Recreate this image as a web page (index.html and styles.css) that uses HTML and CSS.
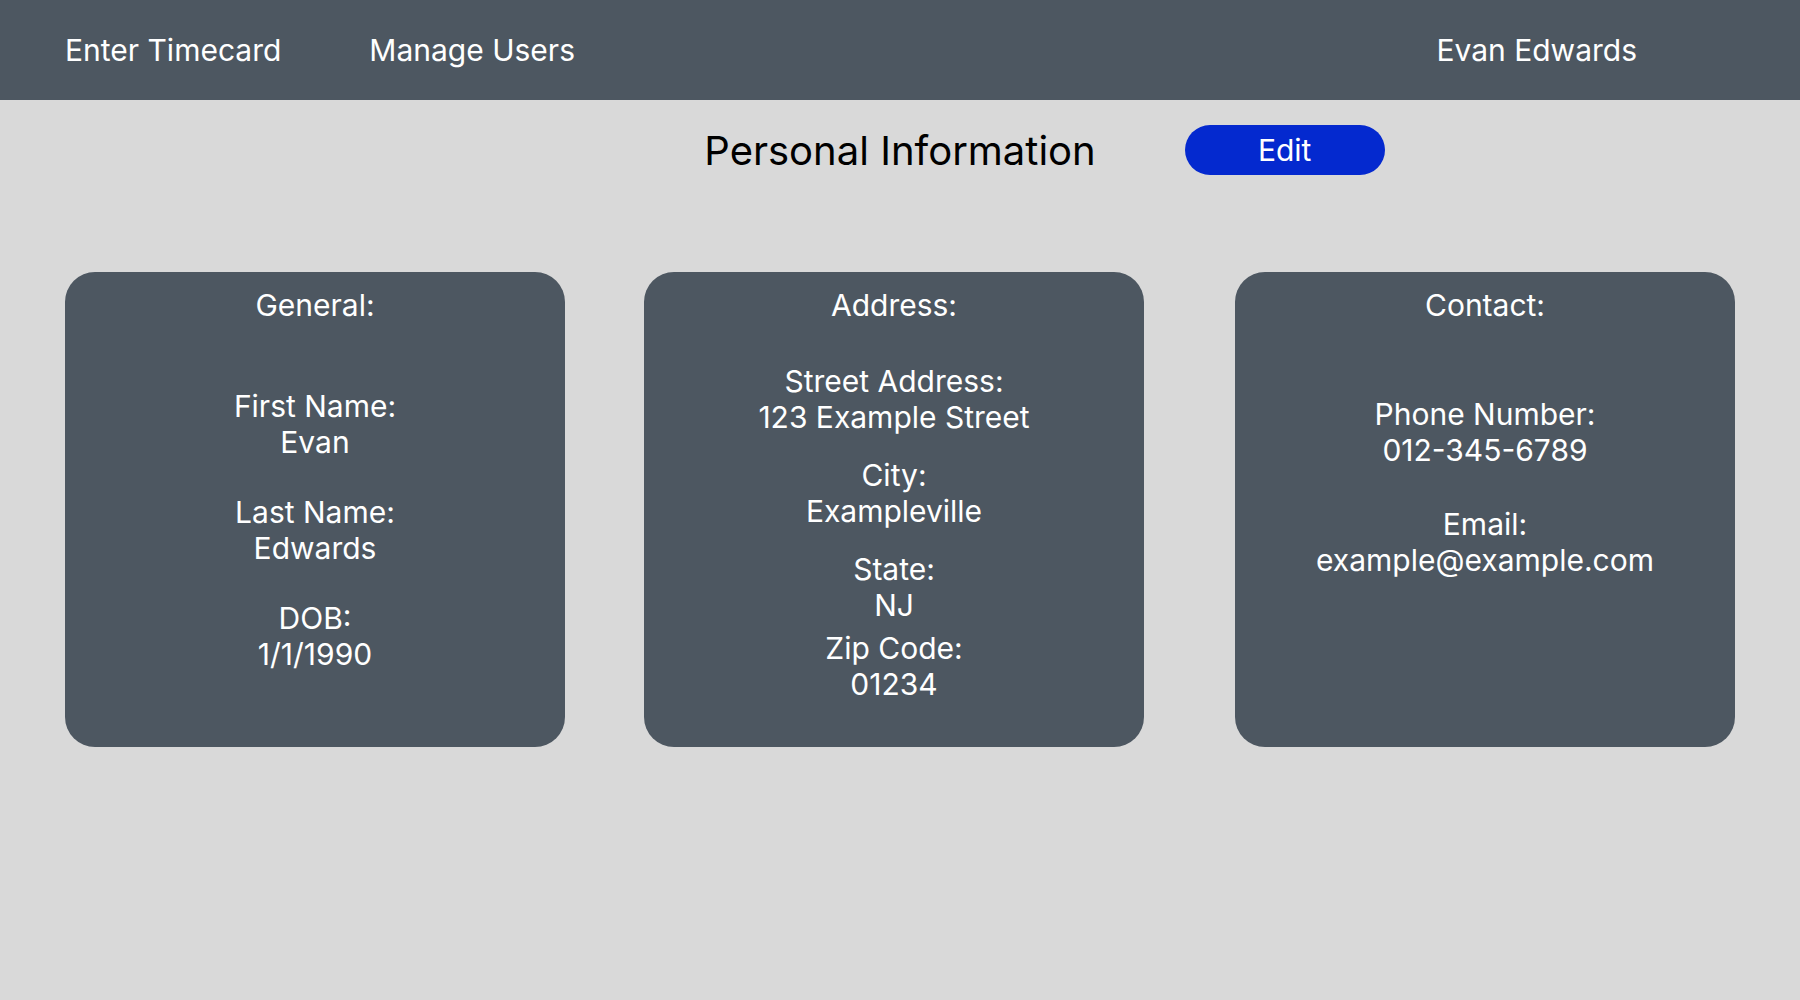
FILE: index.html
```html
<!DOCTYPE html>
<html lang="en">
<head>
<meta charset="utf-8">
<title>Personal Information</title>
<link rel="stylesheet" href="styles.css">
</head>
<body>
<nav class="topbar">
  <a class="nav-link" href="#">Enter Timecard</a>
  <a class="nav-link" href="#">Manage Users</a>
  <span class="nav-user">Evan Edwards</span>
</nav>
<main class="page">
  <header class="page-head">
    <div class="head-side"></div>
    <h1 class="page-title">Personal Information</h1>
    <div class="head-side">
      <button class="edit-btn" type="button">Edit</button>
    </div>
  </header>
  <section class="cards">
    <article class="card card-general">
      <h2 class="card-title">General:</h2>
      <div class="fields">
        <div class="field"><div>First Name:</div><div>Evan</div></div>
        <div class="field"><div>Last Name:</div><div>Edwards</div></div>
        <div class="field"><div>DOB:</div><div>1/1/1990</div></div>
      </div>
    </article>
    <article class="card card-address">
      <h2 class="card-title">Address:</h2>
      <div class="fields">
        <div class="field"><div>Street Address:</div><div>123 Example Street</div></div>
        <div class="field"><div>City:</div><div>Exampleville</div></div>
        <div class="field"><div>State:</div><div>NJ</div></div>
        <div class="field field-tight"><div>Zip Code:</div><div>01234</div></div>
      </div>
    </article>
    <article class="card card-contact">
      <h2 class="card-title">Contact:</h2>
      <div class="fields">
        <div class="field"><div>Phone Number:</div><div>012-345-6789</div></div>
        <div class="field"><div>Email:</div><div>example@example.com</div></div>
      </div>
    </article>
  </section>
</main>
</body>
</html>
```

FILE: styles.css
```css
* { box-sizing: border-box; }

html, body {
  margin: 0;
  padding: 0;
}

body {
  background: #d9d9d9;
  font-family: Inter, "Noto Sans", "Liberation Sans", sans-serif;
  color: #000;
  width: 1800px;
  height: 1000px;
  overflow: hidden;
}

.topbar {
  height: 100px;
  background: #4d5761;
  display: flex;
  align-items: center;
  padding: 0 163px 0 65px;
}

.nav-link,
.nav-user {
  color: #ffffff;
  text-decoration: none;
  font-size: 30px;
  line-height: 36px;
}

.nav-link + .nav-link {
  margin-left: 88px;
}

.nav-user {
  margin-left: auto;
}

.page-head {
  height: 100px;
  display: grid;
  grid-template-columns: 1fr auto 1fr;
  align-items: center;
}

.page-title {
  margin: 2px 0 0;
  font-size: 40px;
  font-weight: 400;
  line-height: 48px;
  color: #000;
}

.head-side {
  display: flex;
  align-items: center;
}

.edit-btn {
  margin-left: 89px;
  width: 200px;
  height: 50px;
  border: none;
  border-radius: 25px;
  background: #0429cf;
  color: #fff;
  font-family: inherit;
  font-size: 30px;
  line-height: 36px;
  padding: 0;
}

.cards {
  display: flex;
  gap: 79px;
  padding-left: 65px;
  margin-top: 72px;
}

.card {
  width: 500px;
  height: 475px;
  background: #4d5761;
  border-radius: 30px;
  padding-top: 15px;
  color: #fff;
  text-align: center;
  font-size: 30px;
  line-height: 36px;
}

.card-contact {
  margin-left: 12px;
}

.card-title {
  margin: 0;
  font-size: 30px;
  font-weight: 400;
  line-height: 36px;
}

.fields {
  display: flex;
  flex-direction: column;
}

.card-general .fields {
  margin-top: 65px;
  gap: 34px;
}

.card-address .fields {
  margin-top: 40px;
  gap: 22px;
}

.card-address .field-tight {
  margin-top: -15px;
}

.card-contact .fields {
  margin-top: 73px;
  gap: 38px;
}
```
